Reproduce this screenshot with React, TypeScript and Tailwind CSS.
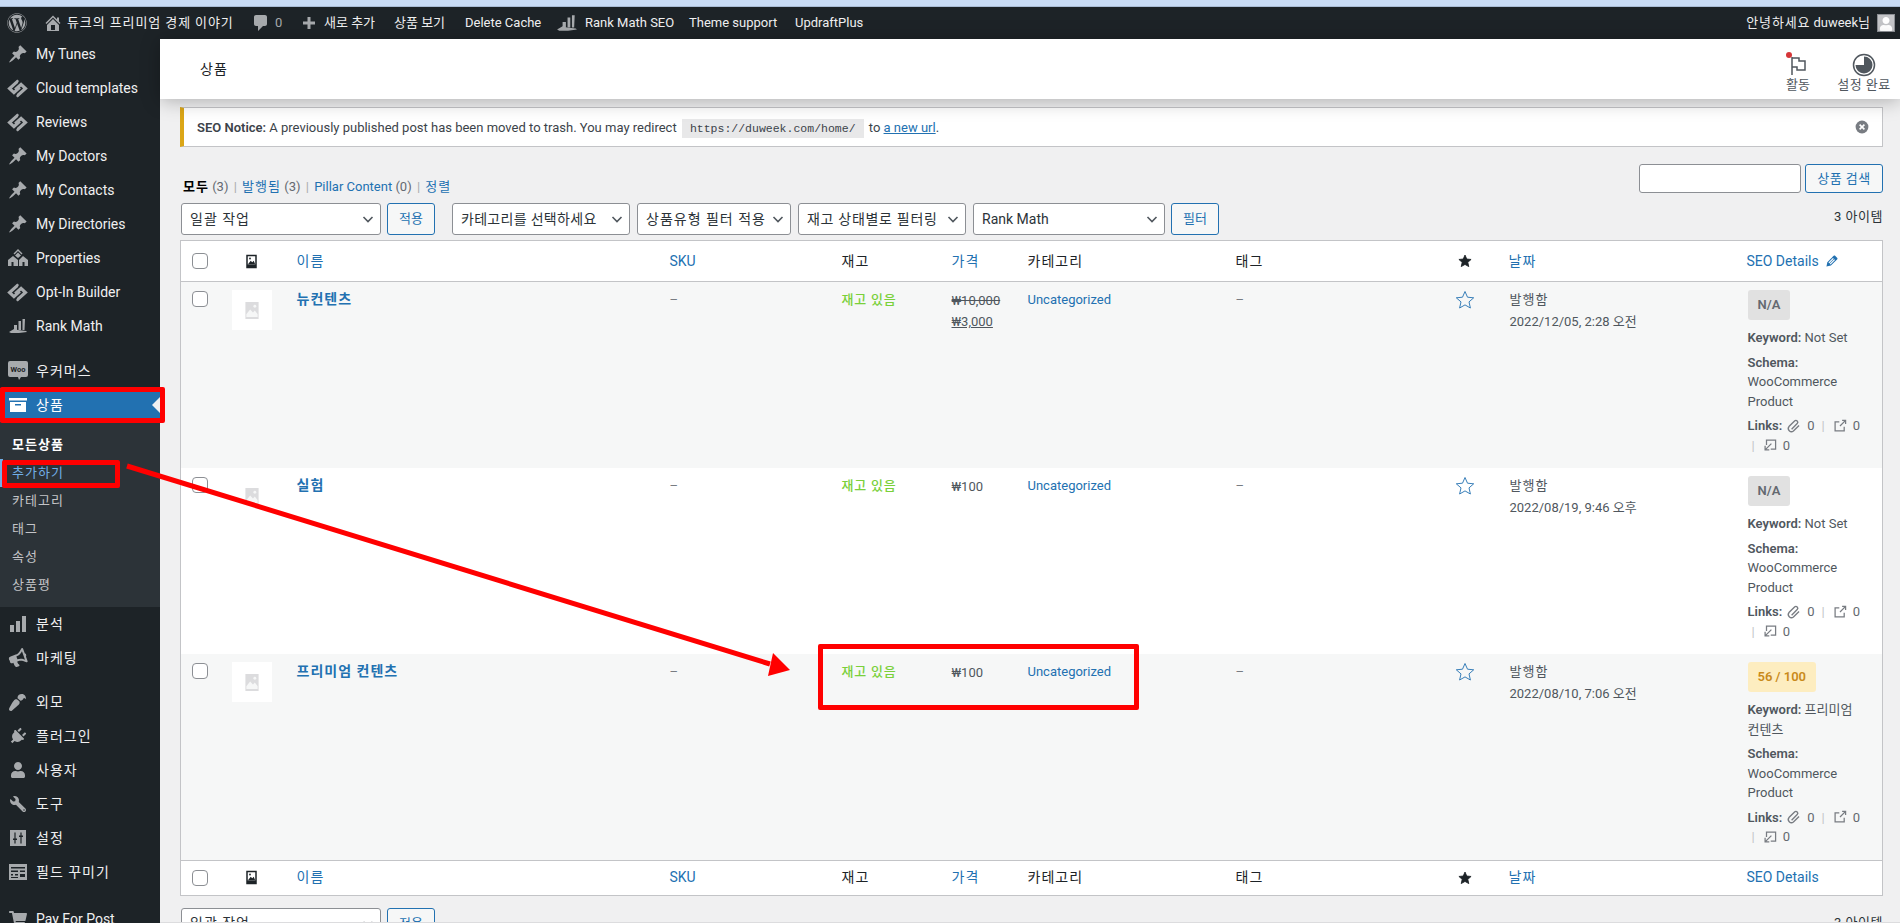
import { ReactNode } from 'react';
import { FaBullhorn, FaPaintBrush, FaPlug, FaShoppingCart, FaUser, FaWordpress, FaWrench } from 'react-icons/fa';

const PIN =
  'M10.44 3.02l1.82-1.82 6.36 6.35-1.83 1.82c-1.05-.68-2.48-.57-3.41.36l-.75.75c-.92.93-1.04 2.35-.35 3.41l-1.83 1.82-2.41-2.41-2.8 2.79c-.42.42-3.38 2.71-3.8 2.29s1.86-3.39 2.28-3.81l2.79-2.79L4.1 9.36l1.83-1.82c1.05.69 2.48.57 3.4-.36l.75-.75c.93-.92 1.05-2.35.36-3.41z';

function Dash({ d, className }: { d: string; className?: string }) {
  return (
    <svg viewBox="0 0 20 20" fill="currentColor" className={className}>
      <path d={d} />
    </svg>
  );
}

function PinIcon() {
  return <Dash d={PIN} className="h-5 w-5" />;
}

function LinkDiamond() {
  return (
    <svg viewBox="0 0 20 20" fill="none" stroke="currentColor" strokeWidth="3" className="h-[21px] w-[21px]">
      <path d="M10.5 4 9.800 3.400 2.400 10l4.200 4 5.600-5.200" />
      <path d="M9.500 16l.7.6 7.400-6.600-4.200-4-5.600 5.200" />
    </svg>
  );
}

function RankIcon({ className = 'h-5 w-5' }: { className?: string }) {
  return (
    <svg viewBox="0 0 20 20" fill="currentColor" className={className}>
      <path d="M1 16l5-3 4 1 8 1 1 1-8 1H3z" />
      <path d="M6 9h3v5H6zM10.500 5H13v9h-2.500zM14.500 3H17l-.5 11h-2z" />
    </svg>
  );
}

function HousesIcon() {
  return (
    <svg viewBox="0 0 20 20" fill="currentColor" className="h-5 w-5">
      <path d="M10 1l4.500 4.500-1 1L10 3 6.500 6.500l-1-1zM10 4.500l3 3-3 2.500-3-2.500z" />
      <path d="M5 8l5 4v6H0v-6zM15 8l5 4v6h-9v-6z" />
      <path d="M3.500 14h2v4h-2zM14.500 14h2v4h-2z" fill="#1d2327" />
    </svg>
  );
}

function WooIcon() {
  return (
    <svg viewBox="0 0 20 20" className="h-5 w-5">
      <path d="M2 0h16a2 2 0 0 1 2 2v12a2 2 0 0 1-2 2h-5l-2 3-1-3H2a2 2 0 0 1-2-2V2a2 2 0 0 1 2-2z" fill="#a7aaad" />
      <text x="10" y="10.500" textAnchor="middle" fontSize="7.500" fontWeight="700" fill="#1d2327">
        Woo
      </text>
    </svg>
  );
}

function ProductIcon() {
  return (
    <svg viewBox="0 0 20 20" fill="currentColor" className="h-5 w-5">
      <path d="M1 3h18v2.500H1zM2 7h16v10H2z" />
      <path d="M7 9h6v1.500H7z" fill="#2271b1" />
    </svg>
  );
}

function BarsIcon() {
  return (
    <svg viewBox="0 0 20 20" fill="currentColor" className="h-5 w-5">
      <path d="M2 11h4v7H2zM8 7h4v11H8zM14 2h4v16h-4z" />
    </svg>
  );
}

function SlidersIcon() {
  return (
    <svg viewBox="0 0 20 20" className="h-5 w-5">
      <path d="M2 2h16v16H2z" fill="currentColor" />
      <path d="M7 4.500v11M13 4.500v11" stroke="#1d2327" strokeWidth="1.200" />
      <path d="M5 10.500h4V12H5zM11 7.500h4V9h-4z" fill="#1d2327" />
    </svg>
  );
}

function FieldsIcon() {
  return (
    <svg viewBox="0 0 20 20" className="h-5 w-5">
      <path d="M1 2h18v16H1z" fill="currentColor" />
      <path d="M3 5h14v1.500H3zM3 8.500h7V10H3zM12 8.500h5V10h-5zM3 12h2v1.500H3zM7 12h3v1.500H7zM12 12h5v3h-5zM3 15h7v1H3z" fill="#1d2327" />
    </svg>
  );
}

type MenuItem = { label: string; icon: ReactNode; gap?: string };

const topMenu: MenuItem[] = [
  { label: 'My Tunes', icon: <PinIcon /> },
  { label: 'Cloud templates', icon: <LinkDiamond /> },
  { label: 'Reviews', icon: <LinkDiamond /> },
  { label: 'My Doctors', icon: <PinIcon /> },
  { label: 'My Contacts', icon: <PinIcon /> },
  { label: 'My Directories', icon: <PinIcon /> },
  { label: 'Properties', icon: <HousesIcon /> },
  { label: 'Opt-In Builder', icon: <LinkDiamond /> },
  { label: 'Rank Math', icon: <RankIcon /> }
];

const bottomMenu: MenuItem[] = [
  { label: '분석', icon: <BarsIcon /> },
  { label: '마케팅', icon: <FaBullhorn className="h-[18px] w-[18px] -rotate-[20deg]" /> },
  { label: '외모', icon: <FaPaintBrush className="h-[17px] w-[17px] rotate-180" />, gap: 'mt-[10px]' },
  { label: '플러그인', icon: <FaPlug className="h-[17px] w-[17px] rotate-[45deg]" /> },
  { label: '사용자', icon: <FaUser className="h-4 w-4" /> },
  { label: '도구', icon: <FaWrench className="h-4 w-4 -scale-x-100" /> },
  { label: '설정', icon: <SlidersIcon /> },
  { label: '필드 꾸미기', icon: <FieldsIcon /> },
  { label: 'Pay For Post', icon: <FaShoppingCart className="h-[18px] w-[18px]" />, gap: 'mt-[13px]' }
];

const subMenu = ['카테고리', '태그', '속성', '상품평'];

function SideItem({ item }: { item: MenuItem }) {
  return (
    <div className={`flex h-[34px] shrink-0 items-center text-[14px] text-[#f0f0f1] ${item.gap ?? ''}`}>
      <span className="flex w-9 shrink-0 justify-center pr-[1px] text-[#a7aaad]">{item.icon}</span>
      <span className={/[a-z]/i.test(item.label) ? '' : 'tracking-[1px]'}>{item.label}</span>
    </div>
  );
}

function Sidebar() {
  return (
    <aside className="-mt-[2px] flex w-[160px] shrink-0 flex-col bg-[#1d2327]">
      {topMenu.map(item => (
        <SideItem key={item.label} item={item} />
      ))}
      <SideItem item={{ label: '우커머스', icon: <WooIcon />, gap: 'mt-[11px]' }} />
      <div className="relative flex h-[34px] shrink-0 items-center bg-[#2271b1] text-[14px] text-white">
        <span className="flex w-9 shrink-0 justify-center pr-[1px]">
          <ProductIcon />
        </span>
        <span className="tracking-[1px]">상품</span>
        <span className="absolute right-0 top-[9px] h-0 w-0 border-y-[8px] border-r-[8px] border-y-transparent border-r-[#f0f0f1]" />
      </div>
      <div className="relative flex h-[185px] shrink-0 flex-col bg-[#2c3338] pt-[9px] text-[13px] tracking-[1px] text-[#c3c4c7]">
        <div className="flex h-[28px] items-center pl-3 font-semibold text-white">모든상품</div>
        <div className="flex h-[28px] items-center border-l-[3px] border-[#72aee6] pl-[9px] text-[#72aee6]">추가하기</div>
        {subMenu.map(label => (
          <div key={label} className="flex h-[28px] items-center pl-3">
            {label}
          </div>
        ))}
      </div>
      {bottomMenu.map(item => (
        <SideItem key={item.label} item={item} />
      ))}
    </aside>
  );
}

function AdminBar() {
  return (
    <header className="flex h-8 shrink-0 items-center justify-between bg-[#1d2327] text-[13px] text-[#f0f0f1]">
      <div className="flex items-center">
        <FaWordpress className="ml-[7px] h-5 w-5 text-[#a7aaad]" />
        <Dash
          d="M16 8.500l1.530 1.530-1.060 1.060L10 4.620l-6.470 6.470-1.060-1.060L10 2.500l4 4v-2h2v4zm-6-2.460l6 5.990V18H4v-5.970zM12 17v-5H8v5h4z"
          className="ml-[16px] h-5 w-5 text-[#a7aaad]"
        />
        <span className="ml-[4px] w-[184px] tracking-[0.9px]">듀크의 프리미엄 경제 이야기</span>
        <Dash
          d="M5 2h9c1.100 0 2 .9 2 2v7c0 1.100-.9 2-2 2h-2l-5 5v-5H5c-1.100 0-2-.9-2-2V4c0-1.100.9-2 2-2z"
          className="h-5 w-5 text-[#a7aaad]"
        />
        <span className="ml-[4px] w-[24px] text-[#a7aaad]">0</span>
        <Dash d="M8.500 4h3v4.500H16v3h-4.500V16h-3v-4.500H4v-3h4.500z" className="h-5 w-5 text-[#a7aaad]" />
        <span className="ml-[5px] w-[70px]">새로 추가</span>
        <span className="w-[71px]">상품 보기</span>
        <span className="w-[90px]">Delete Cache</span>
        <RankIcon className="h-[22px] w-[24px] text-[#a7aaad]" />
        <span className="ml-[6px] w-[104px]">Rank Math SEO</span>
        <span className="w-[106px]">Theme support</span>
        <span>UpdraftPlus</span>
      </div>
      <div className="flex items-center">
        <span>
          <span className="tracking-[0.8px]">안녕하세요</span> duweek님
        </span>
        <span className="ml-[7px] mr-[5px] flex h-[18px] w-[18px] items-end justify-center overflow-hidden border border-[#8c8f94] bg-[#c3c4c7]">
          <FaUser className="h-[14px] w-[14px] text-white" />
        </span>
      </div>
    </header>
  );
}

function PageHeader() {
  return (
    <div className="z-10 flex h-[60px] shrink-0 items-center justify-between bg-white pl-10 shadow-[0_2px_18px_rgba(0,0,0,0.28)]">
      <span className="tracking-[1px] text-[14px] text-[#1d2327]">상품</span>
      <div className="flex text-[13px] text-[#50575e]">
        <div className="relative flex w-[60px] flex-col items-center">
          <svg viewBox="0 0 24 24" fill="none" stroke="#50575e" strokeWidth="1.500" className="mt-[7px] h-6 w-6">
            <path d="M6 4v18M6 5h7v3h6v9h-8v-3H6" />
          </svg>
          <span className="absolute left-[18px] top-[6px] h-[6px] w-[6px] rounded-full bg-[#d63638]" />
          <span className="leading-4">활동</span>
        </div>
        <div className="flex w-[72px] flex-col items-center">
          <svg viewBox="0 0 24 24" className="mt-[7px] h-6 w-6">
            <circle cx="12" cy="12" r="10.500" fill="none" stroke="#50575e" strokeWidth="1.500" />
            <path d="M12 3.500a8.500 8.500 0 1 1-8.500 8.500H12z" fill="#50575e" />
          </svg>
          <span className="leading-4 tracking-[0.5px]">설정 완료</span>
        </div>
      </div>
    </div>
  );
}

function Notice() {
  return (
    <div className="mt-2 flex h-10 shrink-0 items-center justify-between border border-l-4 border-[#c3c4c7] border-l-[#dba617] bg-white pl-[13px] pr-[12px] text-[13px] text-[#3c434a]">
      <span className="pt-[2px]">
        <span className="font-semibold">SEO Notice:</span> A previously published post has been moved to trash. You may
        redirect{' '}
        <code className="mx-[2px] bg-[#e8e8e9] px-[8px] py-[3px] font-['Liberation_Mono',monospace] text-[11.500px]">
          https://duweek.com/home/
        </code>{' '}
        to <span className="text-[#2271b1] underline">a new url</span>.
      </span>
      <svg viewBox="0 0 20 20" className="h-4 w-4">
        <circle cx="10" cy="10" r="8" fill="#787c82" />
        <path d="M7 7l6 6M13 7l-6 6" stroke="#fff" strokeWidth="2" />
      </svg>
    </div>
  );
}

function Select({ label, className }: { label: string; className: string }) {
  return (
    <div
      className={`flex h-8 shrink-0 items-center justify-between rounded-[3px] border border-[#8c8f94] bg-white pl-[8px] pr-[4px] text-[14px] text-[#2c3338] ${className}`}
    >
      <span className="whitespace-nowrap">{label}</span>
      <svg viewBox="0 0 16 16" fill="none" stroke="#50575e" strokeWidth="1.600" className="h-4 w-4 shrink-0">
        <path d="M3.500 6l4.500 4.500L12.500 6" />
      </svg>
    </div>
  );
}

function OutlineButton({ label, className }: { label: string; className: string }) {
  return (
    <div
      className={`flex shrink-0 items-center justify-center rounded-[3px] border border-[#2271b1] bg-[#f6f7f7] text-[13px] text-[#2271b1] ${className}`}
    >
      {label}
    </div>
  );
}

function Toolbar() {
  return (
    <div className="mt-[17px] shrink-0">
      <div className="flex h-[29px] items-center justify-between">
        <div className="ml-[3px] mt-[17px] text-[13px] text-[#646970]">
          <span className="font-semibold tracking-[1px] text-black">모두</span> (3){' '}
          <span className="mx-[2px] text-[#a7aaad]">|</span>{' '}
          <span className="tracking-[1px] text-[#2271b1]">발행됨</span> (3){' '}
          <span className="mx-[2px] text-[#a7aaad]">|</span> <span className="text-[#2271b1]">Pillar Content</span> (0){' '}
          <span className="mx-[2px] text-[#a7aaad]">|</span>{' '}
          <span className="tracking-[1px] text-[#2271b1]">정렬</span>
        </div>
        <div className="flex gap-1">
          <div className="h-[29px] w-[162px] rounded-[3px] border border-[#8c8f94] bg-white" />
          <OutlineButton label="상품 검색" className="h-[29px] w-[78px] tracking-[0.5px]" />
        </div>
      </div>
      <div className="mt-[10px] flex items-center pl-px">
        <Select label="일괄 작업" className="w-[200px] tracking-[1px]" />
        <OutlineButton label="적용" className="ml-[6px] h-8 w-[48px]" />
        <Select label="카테고리를 선택하세요" className="ml-[17px] w-[178px] tracking-[0.3px]" />
        <Select label="상품유형 필터 적용" className="ml-[7px] w-[154px] tracking-[1px]" />
        <Select label="재고 상태별로 필터링" className="ml-[7px] w-[168px] tracking-[0.7px]" />
        <Select label="Rank Math" className="ml-[7px] w-[192px]" />
        <OutlineButton label="필터" className="ml-[6px] h-8 w-[48px]" />
        <span className="ml-auto -mt-[4px] text-[13px] tracking-[0.5px] text-[#2c3338]">3 아이템</span>
      </div>
    </div>
  );
}

function Check() {
  return (
    <input
      type="checkbox"
      className="ml-px block h-4 w-4 appearance-none rounded-[4px] border border-[#8c8f94] bg-white"
    />
  );
}

function ImageIcon() {
  return (
    <svg viewBox="0 0 20 20" className="mx-auto h-[15px] w-[15px]">
      <path d="M3 1h14v18H3z" fill="#1d2327" />
      <path d="M5 3h10v11H5z" fill="#fff" />
      <path d="M5 14l4-5 2 2 2-2 2 5z" fill="#1d2327" />
      <circle cx="8" cy="6" r="1.200" fill="#1d2327" />
    </svg>
  );
}

function Thumb() {
  return (
    <div className="ml-[9px] flex h-10 w-10 items-center justify-center bg-white">
      <svg viewBox="0 0 14 18" className="h-[17px] w-[14px]">
        <path d="M0 0h14v18H0z" fill="#dcdcde" />
        <path d="M1 13l4-5 3 3 2-2 3 4v3H1z" fill="#f6f7f7" />
        <circle cx="10" cy="4.500" r="1.500" fill="#f6f7f7" />
      </svg>
    </div>
  );
}

function Star({ filled }: { filled?: boolean }) {
  return (
    <svg viewBox="0 0 20 20" className={filled ? 'h-[14px] w-[14px]' : 'h-[20px] w-[20px]'}>
      <path
        d="M10 1.500l2.500 5.700 6.200.6-4.700 4.100 1.400 6.100L10 14.900l-5.400 3.100L6 11.900 1.300 7.800l6.200-.6z"
        fill={filled ? '#1d2327' : 'none'}
        stroke={filled ? '#1d2327' : '#2271b1'}
        strokeWidth={filled ? 1.2 : 0.9}
      />
    </svg>
  );
}

function LinkStats() {
  return (
    <div className="mt-[5px] text-[#646970]">
      <div className="flex items-center">
        <span className="font-semibold text-[#50575e]">Links:</span>
        <svg viewBox="0 0 20 20" fill="none" stroke="#787c82" strokeWidth="1.700" className="ml-[4px] h-4 w-4">
          <path d="M7 14l7-7a2.300 2.300 0 0 0-3.300-3.300l-7 7a4 4 0 0 0 5.600 5.600l7-7" />
        </svg>
        <span className="ml-[5px]">0</span>
        <span className="ml-[7px] text-[#c3c4c7]">|</span>
        <svg viewBox="0 0 20 20" fill="none" stroke="#787c82" strokeWidth="1.800" className="ml-[8px] h-[14px] w-[14px]">
          <path d="M9 4H3v13h13v-6M10 10l8-8M13 2h5v5" />
        </svg>
        <span className="ml-[6px]">0</span>
      </div>
      <div className="flex items-center pl-[4px]">
        <span className="text-[#c3c4c7]">|</span>
        <svg viewBox="0 0 20 20" fill="none" stroke="#787c82" strokeWidth="1.800" className="ml-[8px] h-[14px] w-[14px]">
          <path d="M5 10V3h13v13h-7M12 8l-9 9M3 11v6h6" />
        </svg>
        <span className="ml-[6px]">0</span>
      </div>
    </div>
  );
}

type Product = {
  name: string;
  prices: ReactNode;
  date: string;
  score: string;
  keyword: string;
  striped: boolean;
  scored?: boolean;
};

const products: Product[] = [
  {
    name: '뉴컨텐츠',
    prices: (
      <>
        <del>₩10,000</del>
        <br />
        <span className="underline">₩3,000</span>
      </>
    ),
    date: '2022/12/05, 2:28 오전',
    score: 'N/A',
    keyword: 'Not Set',
    striped: true
  },
  {
    name: '실험',
    prices: '₩100',
    date: '2022/08/19, 9:46 오후',
    score: 'N/A',
    keyword: 'Not Set',
    striped: false
  },
  {
    name: '프리미엄 컨텐츠',
    prices: '₩100',
    date: '2022/08/10, 7:06 오전',
    score: '56 / 100',
    keyword: '프리미엄 컨텐츠',
    striped: true,
    scored: true
  }
];

function HeadRow({ footer }: { footer?: boolean }) {
  const cell = `pl-[10px] text-left align-middle text-[14px] font-normal tracking-[1px] ${
    footer ? 'h-[35px] border-t border-[#c3c4c7]' : 'h-[41px] border-b border-[#c3c4c7]'
  }`;
  const link = 'text-[#2271b1]';
  return (
    <tr>
      <td className={cell}>
        <Check />
      </td>
      <td className={`${cell} pl-0`}>
        <div className="pr-[17px]">
          <ImageIcon />
        </div>
      </td>
      <td className={`${cell} ${link}`}>이름</td>
      <td className={`${cell} ${link} tracking-normal`}>SKU</td>
      <td className={cell}>재고</td>
      <td className={`${cell} ${link}`}>가격</td>
      <td className={cell}>카테고리</td>
      <td className={cell}>태그</td>
      <td className={`${cell} pl-0`}>
        <div className="-ml-[1px] -translate-x-[10px]">
          <Star filled />
        </div>
      </td>
      <td className={`${cell} ${link}`}>날짜</td>
      <td className={`${cell} ${link} tracking-normal`}>
        <span className="flex items-center gap-[5px]">
          SEO Details
          {!footer && (
            <Dash
              d="M13.890 3.390l2.710 2.720c.46.460.42 1.240.030 1.640l-8.010 8.020-5.560 1.160 1.160-5.580s7.600-7.630 7.970-8c.39-.39 1.220-.39 1.700.040zM11.160 6.180l-5.590 5.610 1.110 1.110 5.540-5.650zM8.190 14.410l5.580-5.600-1.070-1.080-5.590 5.600z"
              className="h-4 w-4"
            />
          )}
        </span>
      </td>
    </tr>
  );
}

function ProductRow({ product }: { product: Product }) {
  const cell = 'pl-[10px] pt-[8px] align-top text-[13px] leading-[19.5px]';
  return (
    <tr className={product.striped ? 'bg-[#f6f7f7]' : 'bg-white'}>
      <td className={`${cell} pt-[9px]`}>
        <Check />
      </td>
      <td className="pt-[8px] align-top">
        <Thumb />
      </td>
      <td className={`${cell} text-[14px] font-semibold tracking-[1px] text-[#2271b1]`}>{product.name}</td>
      <td className={`${cell} text-[#787c82]`}>–</td>
      <td className={`${cell} font-medium tracking-[0.800px] text-[#7ad03a]`}>재고 있음</td>
      <td className={`${cell} leading-[21px] text-[#50575e]`}>{product.prices}</td>
      <td className={`${cell} text-[#2271b1]`}>Uncategorized</td>
      <td className={`${cell} text-[#787c82]`}>–</td>
      <td className="pt-[8px] align-top">
        <div className="-ml-[4px]">
          <Star />
        </div>
      </td>
      <td className={`${cell} pl-[11px] text-[#50575e]`}>
        <span className="tracking-[1px]">발행함</span>
        <div className="mt-[2px]">{product.date}</div>
      </td>
      <td className={`${cell} break-keep pb-[13px] pl-[11px] text-[#50575e]`}>
        <span
          className={`block h-[30px] w-fit rounded-[3px] text-center font-semibold leading-[30px] ${
            product.scored ? 'bg-[#fdedc0] px-[10px] text-[#c98a1a]' : 'bg-[#e1e1e1] px-[10px] text-[#646970]'
          }`}
        >
          {product.score}
        </span>
        <div className="mt-[8px]">
          <span className="font-semibold">Keyword:</span> {product.keyword}
        </div>
        <div className="mb-[1px] mt-[5px]">
          <span className="font-semibold">Schema:</span>
          <br />
          WooCommerce
          <br />
          Product
        </div>
        <LinkStats />
      </td>
    </tr>
  );
}

function ProductTable() {
  return (
    <table className="mt-[5px] w-[1703px] shrink-0 table-fixed border-collapse border border-[#c3c4c7] bg-white text-[#1d2327]">
      <colgroup>
        <col className="w-[42px]" />
        <col className="w-[64px]" />
        <col className="w-[373px]" />
        <col className="w-[172px]" />
        <col className="w-[110px]" />
        <col className="w-[76px]" />
        <col className="w-[208px]" />
        <col className="w-[233px]" />
        <col className="w-[40px]" />
        <col className="w-[238px]" />
        <col />
      </colgroup>
      <thead>
        <HeadRow />
      </thead>
      <tbody>
        {products.map(product => (
          <ProductRow key={product.name} product={product} />
        ))}
      </tbody>
      <tfoot>
        <HeadRow footer />
      </tfoot>
    </table>
  );
}

function Annotations() {
  return (
    <>
      <div className="absolute left-0 top-[387px] h-[36px] w-[165px] rounded-[2px] border-[5px] border-[#ff0000]" />
      <div className="absolute left-[2px] top-[460px] h-[28px] w-[118px] rounded-[2px] border-[5px] border-[#ff0000]" />
      <div className="absolute left-[818px] top-[644px] h-[66px] w-[321px] rounded-[2px] border-[5px] border-[#ff0000]" />
      <svg viewBox="0 0 1900 923" className="pointer-events-none absolute inset-0 h-[923px] w-[1900px]">
        <path d="M127 466L770 664" stroke="#ff0000" strokeWidth="5" fill="none" />
        <path d="M790 670L768 676L773 653z" fill="#ff0000" />
      </svg>
      <div className="absolute bottom-0 left-[160px] right-0 h-px bg-[#dcdcde]" />
    </>
  );
}

export default function App() {
  return (
    <div className="relative flex h-[923px] w-[1900px] flex-col overflow-hidden bg-[#f0f0f1] font-['Roboto','Noto_Sans_CJK_KR',sans-serif]">
      <div className="h-[7px] shrink-0 border-b border-[#a9bcd5] bg-[#c9dcf5]" />
      <AdminBar />
      <div className="flex min-h-0 flex-1">
        <Sidebar />
        <main className="flex min-w-0 flex-1 flex-col">
          <PageHeader />
          <div className="flex flex-col pl-5 pr-[17px]">
            <Notice />
            <Toolbar />
            <ProductTable />
            <div className="mt-3 flex items-start pl-px">
              <Select label="일괄 작업" className="w-[200px] tracking-[1px]" />
              <OutlineButton label="적용" className="ml-[6px] h-8 w-[48px]" />
              <span className="ml-auto mt-[5px] text-[13px] tracking-[0.5px] text-[#2c3338]">3 아이템</span>
            </div>
          </div>
        </main>
      </div>
      <Annotations />
    </div>
  );
}
